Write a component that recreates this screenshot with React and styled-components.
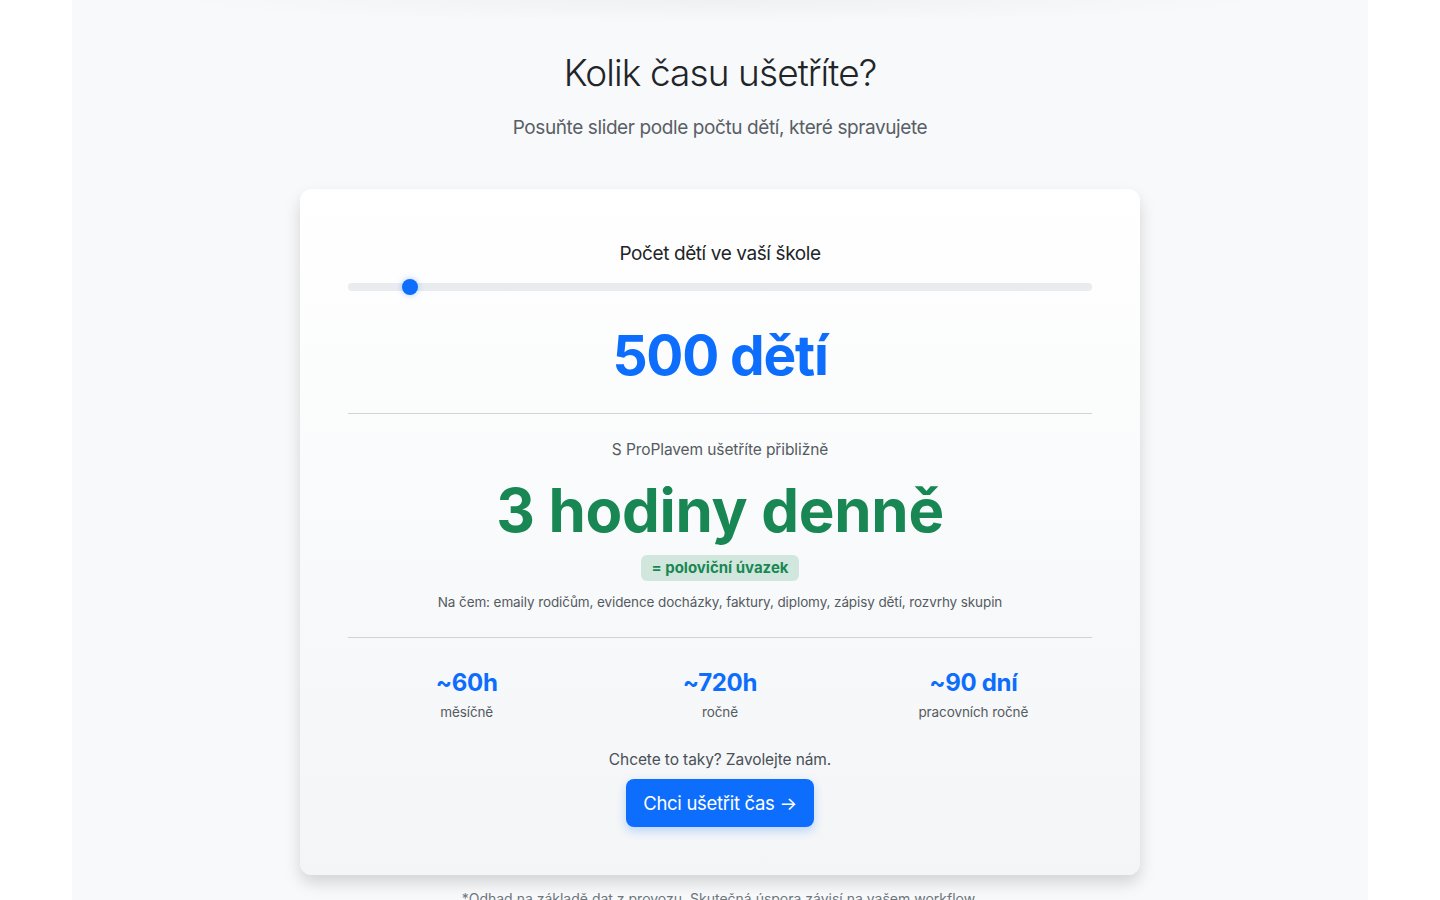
import React, { useState } from 'react'
import styled, { createGlobalStyle } from 'styled-components'

const GlobalStyle = createGlobalStyle`
  * { box-sizing: border-box; }
  body {
    margin: 0;
    background: #fff;
    font-family: Inter, "Noto Sans", "Liberation Sans", sans-serif;
    color: #212529;
    overflow: hidden;
  }
`

const Section = styled.section`
  width: 1296px;
  height: 900px;
  margin: 0 auto;
  background:
    radial-gradient(ellipse 560px 22px at 50% 0, rgba(0, 0, 0, 0.035), rgba(0, 0, 0, 0) 100%),
    #f8f9fa;
  padding-top: 50px;
  text-align: center;
`

const Title = styled.h2`
  margin: 0 0 17px;
  font-size: 37px;
  font-weight: 300;
  line-height: 46px;
  letter-spacing: -0.9px;
  color: #212529;
`

const Lead = styled.p`
  margin: 0 0 46px;
  font-size: 19px;
  line-height: 30px;
  font-weight: 400;
  letter-spacing: -0.4px;
  color: #595f66;
`

const Card = styled.div`
  width: 840px;
  margin: 0 auto;
  padding: 48px;
  border-radius: 12px;
  background: linear-gradient(180deg, #ffffff 0%, #f3f5f7 100%);
  box-shadow: 0 8px 16px rgba(0, 0, 0, 0.15);
`

const Label = styled.label`
  display: block;
  margin-bottom: 8px;
  font-size: 19px;
  line-height: 34px;
  font-weight: 400;
  letter-spacing: -0.4px;
  color: #212529;
`

const Range = styled.input`
  display: block;
  width: 100%;
  height: 16px;
  margin: 0;
  appearance: none;
  -webkit-appearance: none;
  background: transparent;

  &::-webkit-slider-runnable-track {
    height: 8px;
    border-radius: 4px;
    background: #e9ecef;
  }
  &::-webkit-slider-thumb {
    -webkit-appearance: none;
    width: 16px;
    height: 16px;
    margin-top: -4px;
    border-radius: 50%;
    background: #0d6efd;
    box-shadow: 0 0 6px rgba(13, 110, 253, 0.35);
  }
`

const Count = styled.div`
  margin-top: 27px;
  font-size: 55px;
  line-height: 67px;
  font-weight: 700;
  letter-spacing: -1.2px;
  color: #0d6efd;
`

const Divider = styled.hr`
  margin: 24px 0;
  border: 0;
  border-top: 1px solid #ced4da;
`

const Muted = styled.p`
  margin: ${p => p.$m || '0'};
  font-size: ${p => p.$size || 15.5}px;
  line-height: 1.5;
  letter-spacing: -0.1px;
  color: ${p => p.$color || '#555b61'};
`

const Savings = styled.div`
  margin-top: 13px;
  font-size: 60px;
  line-height: 72px;
  font-weight: 700;
  letter-spacing: -0.3px;
  color: #198754;
`

const Badge = styled.span`
  display: inline-block;
  margin-top: 9px;
  padding: 0 10px;
  height: 26px;
  line-height: 26px;
  border-radius: 6px;
  background: #d1e7dd;
  color: #198754;
  font-size: 15px;
  font-weight: 700;
`

const Stats = styled.div`
  display: grid;
  grid-template-columns: repeat(3, 1fr);
  gap: 16px;
  padding-top: 6px;
`

const Stat = styled.div`
  display: flex;
  flex-direction: column;
  align-items: center;
`

const StatValue = styled.div`
  font-size: 24px;
  line-height: 29px;
  font-weight: 700;
  letter-spacing: -0.3px;
  color: #0d6efd;
`

const StatLabel = styled.div`
  margin-top: 5px;
  font-size: 13.5px;
  line-height: 21px;
  letter-spacing: -0.1px;
  color: #555b61;
`

const Button = styled.button`
  margin-top: 8px;
  height: 48px;
  padding: 0 17px;
  border: 0;
  border-radius: 8px;
  background: #0d6efd;
  color: #fff;
  font-family: inherit;
  font-size: 18.5px;
  font-weight: 400;
  letter-spacing: -0.3px;
  box-shadow: 0 4px 10px rgba(13, 110, 253, 0.25);
  cursor: pointer;
`

const Footnote = styled.p`
  margin: 13px 0 0;
  font-size: 14px;
  line-height: 21px;
  color: #6c757d;
`

const stats = [
  { value: '~60h', label: 'měsíčně' },
  { value: '~720h', label: 'ročně' },
  { value: '~90 dní', label: 'pracovních ročně' },
]

export default function App() {
  const [kids, setKids] = useState(500)

  return (
    <>
      <GlobalStyle />
      <Section>
        <Title>Kolik času ušetříte?</Title>
        <Lead>Posuňte slider podle počtu dětí, které spravujete</Lead>
        <Card>
          <Label htmlFor="kids">Počet dětí ve vaší škole</Label>
          <Range
            id="kids"
            type="range"
            min={100}
            max={5500}
            step={50}
            value={kids}
            onChange={e => setKids(Number(e.target.value))}
          />
          <Count>{kids} dětí</Count>
          <Divider />
          <Muted>S ProPlavem ušetříte přibližně</Muted>
          <Savings>3 hodiny denně</Savings>
          <Badge>= poloviční úvazek</Badge>
          <Muted $size={13.5} $m="11px 0 0">
            Na čem: emaily rodičům, evidence docházky, faktury, diplomy, zápisy dětí, rozvrhy skupin
          </Muted>
          <Divider />
          <Stats>
            {stats.map(s => (
              <Stat key={s.label}>
                <StatValue>{s.value}</StatValue>
                <StatLabel>{s.label}</StatLabel>
              </Stat>
            ))}
          </Stats>
          <Muted $m="25px 0 0" $color="#495057">Chcete to taky? Zavolejte nám.</Muted>
          <Button>Chci ušetřit čas →</Button>
        </Card>
        <Footnote>*Odhad na základě dat z provozu. Skutečná úspora závisí na vašem workflow.</Footnote>
      </Section>
    </>
  )
}
